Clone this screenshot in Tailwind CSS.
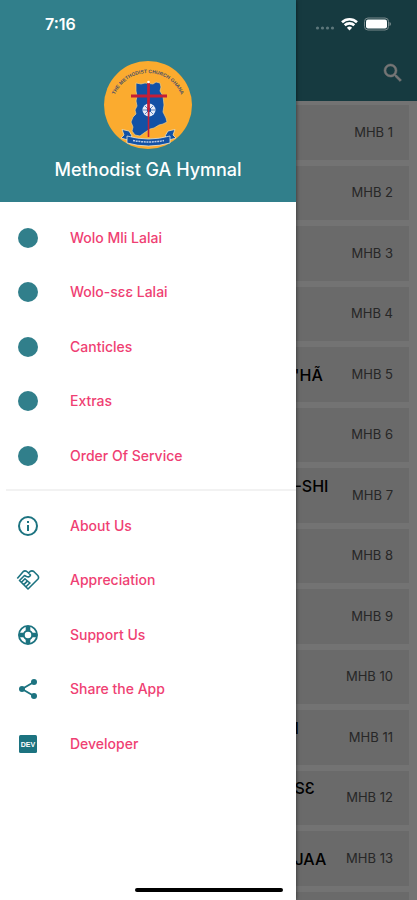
<!DOCTYPE html>
<html lang="en">
<head>
    <meta charset="UTF-8">
    <meta name="viewport" content="width=device-width, initial-scale=1.0">
    <title>Methodist GA Hymnal</title>
    <script src="https://cdn.jsdelivr.net/npm/@tailwindcss/browser@4"></script>
</head>
<body class="relative h-screen overflow-hidden bg-[#fafafa] font-['Inter',sans-serif]">
    <!-- Hymn list -->
    <main class="h-full overflow-hidden">
        <header class="flex h-[101px] items-end justify-end bg-[#317f8b] px-3 pb-4">
            <button type="button" aria-label="Search" class="text-white">
                <svg class="size-6" viewBox="0 0 24 24" fill="currentColor"><path d="M15.500 14h-.79l-.28-.27A6.470 6.470 0 0 0 16 9.500 6.500 6.500 0 1 0 9.500 16c1.610 0 3.090-.59 4.230-1.570l.27.28v.79l5 4.990L20.490 19l-4.990-5zm-6 0C7.010 14 5 11.990 5 9.500S7.010 5 9.500 5 14 7.010 14 9.500 11.990 14 9.500 14z" stroke="currentColor" stroke-width=".5"/></svg>
            </button>
        </header>
        <ul id="hymn-list" class="flex flex-col gap-1.5 pt-1 pr-2"></ul>
    </main>

    <div class="absolute inset-0 bg-black/54"></div>

    <!-- Drawer -->
    <aside class="absolute inset-y-0 left-0 w-[71%] bg-white shadow-[0_0_4px_rgba(0,0,0,0.6)]">
        <div class="flex flex-col items-center bg-[#317f8b] pt-[61px] pb-5">
            <svg class="size-[88px]" viewBox="0 0 88 88">
                <circle cx="44" cy="44" r="44" fill="#fbab2f"/>
                <path id="arc" d="M8.500 42 A36 36 0 0 1 79.500 42" fill="none"/>
                <text font-family="Liberation Sans" font-size="5" font-weight="bold" fill="#4a5068"><textPath href="#arc" startOffset="50%" text-anchor="middle">THE METHODIST CHURCH GHANA</textPath></text>
                <path d="M32 22l5 1 4-1 8 1 3-2 4 1 1 4-1 4 3 5 1 9-1 7 3 6 1 4-4 2-4 1-5 3-4 1-6 4-4 3-5-1-3-4 1-4-2-5 2-5 3-3-1-4 2-4-1-5 1-5-1-5z" fill="#1251a5" stroke="#f1cf86" stroke-width=".7"/>
                <circle cx="45" cy="49" r="6.500" fill="#e6edf8"/>
                <path d="M45 43v12M39 49h12M41 45l8 8M49 45l-8 8" stroke="#5b82bd" stroke-width="1"/>
                <circle cx="45" cy="49" r="2.200" fill="#1251a5"/>
                <path d="M44.500 22v54" stroke="#c51e36" stroke-width="1.600"/>
                <path d="M44.500 22v27" stroke="#c51e36" stroke-width="2.600"/>
                <path d="M27 35h36" stroke="#c51e36" stroke-width="3"/>
                <circle cx="44.500" cy="21" r="1.300" fill="#fff"/>
                <path d="M18 68.500l7 1.500 3 5-4 4-7-2 3-3zM71 68.500l-7 1.500-3 5 4 4 7-2-3-3z" fill="#1251a5" stroke="#f3dfb2" stroke-width=".8"/>
                <path d="M23 75q21.500 6 43 0v7q-21.500 6-43 0z" fill="#1251a5" stroke="#e8e4d5" stroke-width=".8"/>
                <path d="M29 79.500q15.500 3 31 0" fill="none" stroke="#b9cbe6" stroke-width="1.500" stroke-dasharray="2 .7"/>
            </svg>
            <h1 class="mt-2 text-lg leading-[25px] font-medium text-white">Methodist GA Hymnal</h1>
        </div>

        <nav class="pt-2 text-sm font-medium text-[#ef3f73]">
            <ul>
                <li class="odd:h-[55px] even:h-[54px]"><a href="#" class="flex h-full items-center gap-[30px] px-4"><svg class="size-6 shrink-0 text-[#317f8b]" viewBox="0 0 24 24" fill="currentColor"><circle cx="12" cy="12" r="10"/></svg>Wolo Mli Lalai</a></li>
                <li class="odd:h-[55px] even:h-[54px]"><a href="#" class="flex h-full items-center gap-[30px] px-4"><svg class="size-6 shrink-0 text-[#317f8b]" viewBox="0 0 24 24" fill="currentColor"><circle cx="12" cy="12" r="10"/></svg>Wolo-sɛɛ Lalai</a></li>
                <li class="odd:h-[55px] even:h-[54px]"><a href="#" class="flex h-full items-center gap-[30px] px-4"><svg class="size-6 shrink-0 text-[#317f8b]" viewBox="0 0 24 24" fill="currentColor"><circle cx="12" cy="12" r="10"/></svg>Canticles</a></li>
                <li class="odd:h-[55px] even:h-[54px]"><a href="#" class="flex h-full items-center gap-[30px] px-4"><svg class="size-6 shrink-0 text-[#317f8b]" viewBox="0 0 24 24" fill="currentColor"><circle cx="12" cy="12" r="10"/></svg>Extras</a></li>
                <li class="odd:h-[55px] even:h-[54px]"><a href="#" class="flex h-full items-center gap-[30px] px-4"><svg class="size-6 shrink-0 text-[#317f8b]" viewBox="0 0 24 24" fill="currentColor"><circle cx="12" cy="12" r="10"/></svg>Order Of Service</a></li>
            </ul>
            <hr class="mt-1.5 mb-[7px] ml-1.5 border-t-2 border-[#f2f2f2]">
            <ul>
                <li class="odd:h-[55px] even:h-[54px]"><a href="#" class="flex h-full items-center gap-[30px] px-4">
                    <svg class="size-6 shrink-0 text-[#1c7380]" viewBox="0 0 24 24" fill="currentColor"><path d="M11 7h2v2h-2zm0 4h2v6h-2zm1-9a10 10 0 1 0 0 20 10 10 0 0 0 0-20zm0 18a8 8 0 1 1 0-16 8 8 0 0 1 0 16z"/></svg>About Us</a></li>
                <li class="odd:h-[55px] even:h-[54px]"><a href="#" class="flex h-full items-center gap-[30px] px-4">
                    <svg class="size-6 shrink-0 text-[#1c7380]" viewBox="0 0 24 24" fill="none" stroke="currentColor" stroke-width="1.600" stroke-linejoin="round"><path d="M1.300 10.500L7.300 3.500Q9.500 2 12 4.500L14.500 7Q13.500 9.800 10.500 8.500L8.500 7.500 3.500 12.500 12 21 21.800 11.200Q23.300 9.500 21.800 7.500L18 3.700Q16 2 13.800 3.700L12.500 5M5.500 14.300l4-4M7.800 16.600l4-4M10 18.800l4-4M8.500 10.500l6 5"/></svg>Appreciation</a></li>
                <li class="odd:h-[55px] even:h-[54px]"><a href="#" class="flex h-full items-center gap-[30px] px-4">
                    <svg class="size-6 shrink-0 text-[#1c7380]" viewBox="0 0 24 24" fill="none" stroke="currentColor"><circle cx="12" cy="12" r="9.100" stroke-width="1.800"/><circle cx="12" cy="12" r="4.200" stroke-width="1.900"/><path d="M12 3v5M12 16v5M3 12h5M16 12h5" stroke-width="4.600"/></svg>Support Us</a></li>
                <li class="odd:h-[55px] even:h-[54px]"><a href="#" class="flex h-full items-center gap-[30px] px-4">
                    <svg class="size-6 shrink-0 text-[#1c7380]" viewBox="0 0 24 24" fill="currentColor"><path d="M18 5L6 12l12 7" fill="none" stroke="currentColor" stroke-width="1.800"/><circle cx="18" cy="5" r="3"/><circle cx="6" cy="12" r="3"/><circle cx="18" cy="19" r="3"/></svg>Share the App</a></li>
                <li class="odd:h-[55px] even:h-[54px]"><a href="#" class="flex h-full items-center gap-[30px] px-4">
                    <svg class="size-6 shrink-0 text-[#1c7380]" viewBox="0 0 24 24" fill="currentColor" aria-hidden="true"><rect x="3" y="3" width="18" height="18" rx="1.500"/><text x="12" y="14.800" text-anchor="middle" font-family="Liberation Sans" font-size="7" font-weight="bold" fill="#fff">DEV</text></svg>Developer</a></li>
            </ul>
        </nav>
    </aside>

    <!-- Status bar -->
    <div class="absolute inset-x-0 top-0 flex h-12 items-center justify-between pr-[26px] pl-[45px] text-white">
        <span class="text-base font-semibold">7:16</span>
        <div class="flex items-center gap-1.5">
            <svg class="mt-2 h-1 w-5" viewBox="0 0 20 4" fill="#5d777b"><circle cx="2.500" cy="2" r="1.600"/><circle cx="7.500" cy="2" r="1.600"/><circle cx="12.500" cy="2" r="1.600"/><circle cx="17.500" cy="2" r="1.600"/></svg>
            <svg class="h-3.5 w-[17px]" viewBox="0 0 17 14" fill="none" stroke="#fff" stroke-width="2.600"><path d="M1 5.300a10.800 10.800 0 0 1 15 0M3.700 8.300a6.900 6.900 0 0 1 9.600 0"/><path d="M8.500 13.500L5.900 10.800a3.800 3.800 0 0 1 5.200 0z" fill="#fff" stroke="none"/></svg>
            <svg class="h-3.5 w-[27px]" viewBox="0 0 27 14"><rect x=".5" y="1" width="24" height="12" rx="3.500" fill="none" stroke="#78898c"/><rect x="2" y="2.500" width="21" height="9" rx="2" fill="#fff"/><path d="M25.500 5v4q1.500-.5 1.500-2t-1.500-2z" fill="#78898c"/></svg>
        </div>
    </div>

    <!-- Home indicator -->
    <div class="absolute bottom-2 left-1/2 h-1 w-[148px] -translate-x-1/2 rounded-full bg-black"></div>

    <script>
        const titles = { 5: "'HÃ", 7: '-SHI<br>&nbsp;', 11: 'I<br>&nbsp;', 12: 'SƐ<br>&nbsp;', 13: 'JAA' };

        let html = '';
        for (let number = 1; number <= 13; number++) {
            html += `<li class="shrink-0 odd:h-[55px] even:h-[54px]">
                <a href="#" class="flex h-full items-center justify-between bg-[#e6e6e6] pr-4 pl-[72%]">
                    <span class="text-base leading-5 font-medium text-black">${titles[number] || ''}</span>
                    <span class="text-[13px] whitespace-nowrap text-[#555555]">MHB ${number}</span>
                </a>
            </li>`;
        }
        // Start of the next row, below the fold
        html += '<li class="h-[54px] shrink-0 bg-[#e6e6e6]"></li>';
        document.getElementById('hymn-list').innerHTML = html;
    </script>
</body>
</html>
